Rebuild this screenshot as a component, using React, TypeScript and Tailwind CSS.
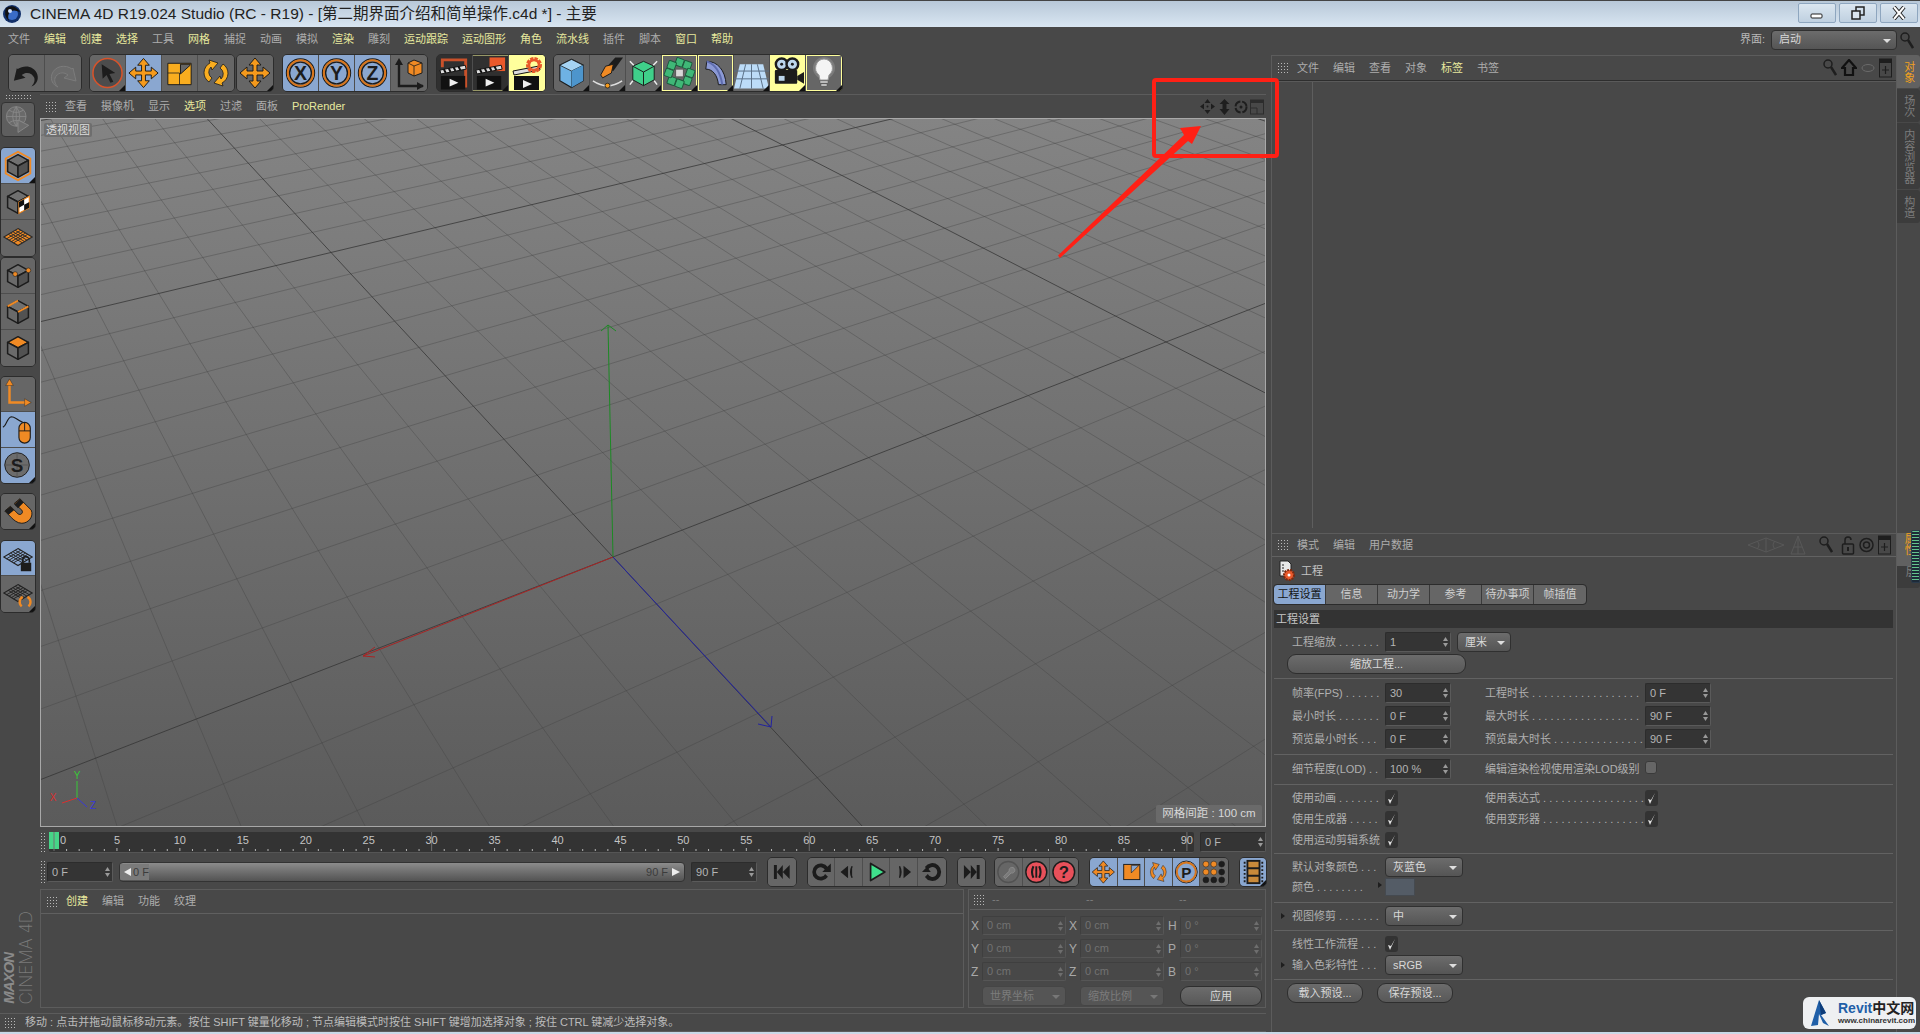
import { ReactNode } from "react";

const O = "#f59a1c";
const K = "#1c1c1c";

const grip = "bg-[radial-gradient(circle,#b8b8b8_0.8px,transparent_1px)] bg-[length:3px_3px]";

// grid on the floor, worked out from the four big crossings in the viewport
const H = { a: 890, b: -126.3, c: 613, d: -116.2, e: -185.8, f: 557, g: 0.289, h: 0.4703 };
const project = (u: number, v: number) => {
  const w = H.g * u + H.h * v + 1;
  return [(H.a * u + H.b * v + H.c) / w - 40, (H.d * u + H.e * v + H.f) / w - 118];
};
const floorLines = () => {
  const out: { p: number[]; q: number[]; major: boolean }[] = [];
  for (let i = -50; i <= 150; i++) {
    const t = i / 10;
    const major = i % 10 === 0;
    const v0 = Math.max(-5, (0.04 - 1 - H.g * t) / H.h);
    const u0 = Math.max(-5, (0.04 - 1 - H.h * t) / H.g);
    out.push({ p: project(t, v0), q: project(t, 15), major });
    out.push({ p: project(u0, t), q: project(15, t), major });
  }
  return out;
};

const Ico = ({ children, s = 36 }: { children: ReactNode; s?: number }) => (
  <svg viewBox="0 0 36 36" width={s} height={s}>{children}</svg>
);

const ARROWS = "M18 3l6 7h-4v6h6v-4l7 6-7 6v-4h-6v6h4l-6 7-6-7h4v-6h-6v4l-7-6 7-6v4h6v-6h-4z";
const Arrows = ({ fill = O }: { fill?: string }) => <path d={ARROWS} fill={fill} stroke={K} strokeWidth="1" strokeLinejoin="round" />;

const Letter = ({ l }: { l: string }) => (
  <>
    <circle cx="18" cy="18" r="14.5" fill="none" stroke={K} strokeWidth="1.2" />
    <circle cx="18" cy="18" r="13" fill="none" stroke="#d8761c" strokeWidth="2.2" />
    <circle cx="18" cy="18" r="11.2" fill="none" stroke={K} strokeWidth="1.4" />
    <text x="18" y="25" textAnchor="middle" fontSize="20" fontWeight="700" fontFamily="Liberation Sans" fill={K}>{l}</text>
  </>
);

const Clapper = ({ top }: { top?: ReactNode }) => (
  <>
    <rect x="0" y="0" width="36" height="36" fill="#303030" />
    {top}
    <rect x="4" y="21" width="25" height="14" fill="#111" />
    <path d="M3 15l26-5 1 4-26 5z" fill="#ddd" stroke="#111" strokeWidth="1" />
    <path d="M7 14l2 4M12 13l2 4M17 12l2 4M22 11l2 4" stroke="#111" strokeWidth="2" />
    <path d="M13 24l9 4-9 4z" fill="#eee" />
  </>
);

const CubeBase = ({ top = "#707070" }: { top?: string }) => (
  <>
    <path d="M18 6l11 6-11 6-11-6z" fill={top} stroke={K} strokeWidth="1.6" strokeLinejoin="round" />
    <path d="M7 12l11 6v12l-11-6z" fill="#6a6a6a" stroke={K} strokeWidth="1.6" strokeLinejoin="round" />
    <path d="M29 12l-11 6v12l11-6z" fill="#525252" stroke={K} strokeWidth="1.6" strokeLinejoin="round" />
  </>
);

const Diamond = ({ stroke, fill }: { stroke: string; fill: string }) => (
  <>
    <path d="M18 8l15 9-15 9-15-9z" fill={fill} stroke={stroke} strokeWidth="1.2" />
    <path d="M12.500 11.300l15 9M7.500 14l15 9M23.500 11.300l-15 9M28.500 14l-15 9M15 9.800l15 9M10 12.800l15 9M21 9.800l-15 9M26 12.800l-15 9" stroke={stroke} strokeWidth="1" fill="none" />
  </>
);

type Tone = "plain" | "blue" | "yellow" | "ring" | "dark";
const tones: Record<Tone, string> = {
  plain: "bg-[#666666]",
  blue: "bg-[#8aa7d0]",
  yellow: "bg-[#ffff9c]",
  ring: "bg-[#666666] shadow-[inset_0_0_0_1px_#ffff9c]",
  dark: "bg-[#303030]",
};

const Btn = ({ tone = "plain", corner, children, w = "w-9", h = "h-9" }: { tone?: Tone; corner?: boolean; children: ReactNode; w?: string; h?: string }) => (
  <div className={`relative flex shrink-0 items-center justify-center overflow-hidden ${w} ${h} ${tones[tone]}`}>
    {children}
    {corner && <span className="absolute bottom-0 right-0 border-[3px] border-transparent border-b-[#111] border-r-[#111]" />}
  </div>
);

const Group = ({ children, className = "", col }: { children: ReactNode; className?: string; col?: boolean }) => (
  <div className={`flex shrink-0 overflow-hidden rounded-[4px] outline outline-[#2c2c2c] ${col ? "flex-col divide-y" : "divide-x"} divide-[#4e4e4e] ${className}`}>
    {children}
  </div>
);

const MenuItem = ({ t, y }: { t: string; y?: boolean }) => (
  <span className={`whitespace-nowrap ${y ? "text-[#e7e89e]" : "text-[#adadad]"}`}>{t}</span>
);

const TopToolbar = () => (
  <div className="flex h-9 items-center pl-[9px]">
    <Group>
      <Btn><Ico><path d="M8 13l-3 13 12-3-4-3c5-4 11-2 13 3 1 4-1 7-3 9 5-2 8-7 6-13-3-8-13-10-20-5z" fill={K} /></Ico></Btn>
      <Btn><Ico><path d="M28 13l3 13-12-3 4-3c-5-4-11-2-13 3-1 4 1 7 3 9-5-2-8-7-6-13 3-8 13-10 20-5z" fill="#6c6c6c" stroke="#7c7c7c" /></Ico></Btn>
    </Group>
    <Group className="ml-[9px]">
      <Btn corner><Ico><circle cx="18" cy="18" r="15" fill="#4c4c4c" stroke="#d8532a" strokeWidth="1.6" /><path d="M12 9l14 9-6 1 4 8-3 1-4-8-4 4z" fill={K} /></Ico></Btn>
      <Btn tone="blue"><Ico><Arrows /></Ico></Btn>
      <Btn><Ico><path d="M6 8h24v22H6z" fill="#f9ad1f" stroke={K} /><path d="M19 9h10v1L19 19z" fill="#666" stroke={K} strokeWidth="1" /><path d="M6 18h12v12" fill="none" stroke={K} strokeWidth="0.8" /></Ico></Btn>
      <Btn><Ico><path d="M11 27A11 11 0 0 1 12 8l-1-3 9 3-6 7-1-3a7 7 0 0 0 1 11z" fill="#f9ad1f" stroke={K} strokeWidth="0.8" /><path d="M25 9a11 11 0 0 1-1 19l1 3-9-3 6-7 1 3a7 7 0 0 0-1-11z" fill="#f9ad1f" stroke={K} strokeWidth="0.8" /></Ico></Btn>
    </Group>
    <Group className="ml-[3px]"><Btn corner><Ico><Arrows /></Ico></Btn></Group>
    <Group className="ml-[10px]">
      <Btn tone="blue"><Ico><Letter l="X" /></Ico></Btn>
      <Btn tone="blue"><Ico><Letter l="Y" /></Ico></Btn>
      <Btn tone="blue"><Ico><Letter l="Z" /></Ico></Btn>
      <Btn><Ico><path d="M8 8v23h24" fill="none" stroke={K} strokeWidth="2.4" /><path d="M8 3l-4 7h8zM33 31l-7-4v8z" fill={K} /><path d="M23 5l8 3v10l-8 3-6-3V8z" fill="#f08a24" stroke={K} /><path d="M17 8l6 3 8-3M23 11v10" fill="none" stroke={K} strokeWidth="0.8" /></Ico></Btn>
    </Group>
    <Group className="ml-[10px]">
      <Btn tone="dark"><Ico><Clapper top={<path d="M4 12V3h27v30h-3V6H7v6z" fill="#c9512a" />} /></Ico></Btn>
      <Btn tone="ring" corner><Ico><Clapper top={<rect x="17" y="2" width="16" height="14" fill="#e9592b" />} /></Ico></Btn>
      <Btn tone="yellow"><Ico><rect width="36" height="36" fill="#ffff9c" /><g transform="translate(1 1)"><path d="M4 20h25v14H4z" fill="#111" /><path d="M3 15l26-5 1 4-26 5z" fill="#ddd" stroke="#111" /><path d="M13 24l9 4-9 4z" fill="#eee" /></g><circle cx="25" cy="10" r="6" fill="none" stroke="#e9592b" strokeWidth="4" strokeDasharray="3 1" /><circle cx="25" cy="10" r="5" fill="none" stroke="#e9592b" strokeWidth="2.5" /></Ico></Btn>
    </Group>
    <Group className="ml-[9px]">
      <Btn corner><Ico><path d="M18 4l12 6v16l-12 7-12-7V10z" fill="#6eb2e4" stroke={K} strokeWidth="1.2" /><path d="M6 10l12 6 12-6-12-6z" fill="#a5d3f3" stroke={K} strokeWidth="0.8" /><path d="M18 16v17" stroke={K} strokeWidth="0.8" /><path d="M18 16l12-6v16l-12 7z" fill="#4d95cc" /></Ico></Btn>
      <Btn corner><Ico><path d="M26 2l8 0-10 14-8-3z" fill={K} /><path d="M24 9l-8 2-5 9 2 3 9-5z" fill="#f08a24" stroke={K} /><path d="M3 26q15 10 30 0" fill="none" stroke="#ddd" strokeWidth="1.5" /><circle cx="18" cy="31" r="2.500" fill={O} stroke={K} strokeWidth="0.8" /></Ico></Btn>
      <Btn corner><Ico><path d="M18 6l11 5v14l-11 6-11-6V11z" fill="#3fd08a" stroke={K} /><path d="M7 11l11 6 11-6" fill="none" stroke={K} /><path d="M18 17v14" stroke={K} /><path d="M4 6l4 4M32 6l-4 4M4 30l3-4M32 30l-3-4" stroke="#eee" strokeWidth="1.500" /></Ico></Btn>
      <Btn tone="ring" corner><Ico>
        {[[18, 7], [26, 10], [29, 18], [26, 26], [18, 29], [10, 26], [7, 18], [10, 10]].map(([x, y]) => (
          <rect key={`${x}-${y}`} x={x - 4} y={y - 4} width="8" height="8" rx="1" fill="#3fb877" stroke="#1d5a3c" transform={`rotate(20 ${x} ${y})`} />
        ))}
        <rect x="14" y="14" width="8" height="8" fill="#d8d8d8" stroke="#555" />
      </Ico></Btn>
      <Btn tone="ring" corner><Ico><path d="M9 6c11 0 19 9 20 24h-8C20 20 15 14 8 14z" fill="#8b99d4" stroke={K} /><path d="M9 6c9 3 14 11 16 24" fill="none" stroke="#5e6cae" strokeWidth="2" /></Ico></Btn>
      <Btn corner><Ico><path d="M6 9h24l6 25H0z" fill="#bcdcf8" /><path d="M0 16h36M0 24h36M12 9L6 34M24 9l6 25M18 9v25" stroke="#5a6f86" strokeWidth="1" /><rect y="4" width="36" height="3" fill="#666" /></Ico></Btn>
      <Btn tone="yellow" corner><Ico><circle cx="12" cy="9" r="6" fill="#bcd6ec" stroke={K} strokeWidth="2.5" /><circle cx="23" cy="9" r="6" fill="#bcd6ec" stroke={K} strokeWidth="2.5" /><circle cx="12" cy="9" r="1.500" fill={K} /><circle cx="23" cy="9" r="1.500" fill={K} /><rect x="5" y="15" width="23" height="14" rx="1" fill={K} /><rect x="9" y="21" width="6" height="5" fill="#bcd6ec" /><path d="M28 21l7-4v12l-7-4z" fill={K} /></Ico></Btn>
      <Btn tone="ring" corner><Ico><circle cx="18" cy="13" r="11" fill="#8a8a8a" opacity=".6" /><path d="M18 4a9 9 0 0 1 5 16l-1 5h-8l-1-5a9 9 0 0 1 5-16z" fill="#f4f4f4" stroke="#999" /><path d="M14 26h8v2h-8zM15 29h6v2h-6z" fill="#ddd" stroke="#555" strokeWidth="0.5" /></Ico></Btn>
    </Group>
  </div>
);

const SideBar = () => (
  <div className="relative flex w-10 shrink-0 flex-col pl-px">
    <div className={`ml-1 h-[6px] w-[26px] ${grip}`} />
    <div className="mt-[2px] flex h-[35px] w-[34px] items-center justify-center rounded-[4px] border border-[#333] bg-[#5e5e5e]">
      <Ico s={32}><circle cx="16" cy="14" r="11" fill="#6a6a6a" stroke="#888" /><path d="M5 14h22M16 3v22M8 7q8 5 16 0M8 21q8-5 16 0M16 3q-8 11 0 22M16 3q8 11 0 22" fill="none" stroke="#888" /><path d="M18 18l12 6-12 8z" fill="#6d6d6d" stroke="#8a8a8a" /></Ico>
    </div>
    <Group col className="mt-[11px] w-[34px]">
      <Btn tone="blue" corner w="w-full"><Ico s={34}><path d="M18 3l13 7v16l-13 7-13-7V10z" fill="none" stroke="#f08a24" strokeWidth="2" /><CubeBase /></Ico></Btn>
      <Btn w="w-full"><Ico s={34}><CubeBase /><path d="M30 12l-11 6v12l11-6z" fill="#fff" stroke="#f08a24" strokeWidth="1.200" /><path d="M19 18l5.500-3v6l-5.500 3zM24.500 21l5.500-3v6l-5.500 3z" fill="#111" /></Ico></Btn>
      <Btn w="w-full"><Ico s={34}><Diamond stroke="#2a2a2a" fill="#f08a24" /></Ico></Btn>
    </Group>
    <Group col className="mt-[2px] w-[34px]">
      <Btn w="w-full"><Ico s={34}><CubeBase /><circle cx="15" cy="16" r="2.500" fill="#f08a24" stroke={K} strokeWidth="0.6" /><circle cx="29" cy="12" r="2.500" fill="#f08a24" stroke={K} strokeWidth="0.6" /></Ico></Btn>
      <Btn w="w-full"><Ico s={34}><CubeBase /><path d="M7 12l11-6" stroke="#f08a24" strokeWidth="2" /><path d="M18 18l11-6" stroke="#f08a24" strokeWidth="2" /></Ico></Btn>
      <Btn w="w-full"><Ico s={34}><CubeBase top="#f08a24" /></Ico></Btn>
    </Group>
    <Group col className="mt-[11px] w-[34px]">
      <Btn w="w-full" h="h-[35.300px]"><Ico s={34}><path d="M9 7v20h19" fill="none" stroke="#f08a24" strokeWidth="2.600" /><path d="M9 2l-4 7h8zM32 27l-7-4v8z" fill="#f08a24" stroke={K} strokeWidth="0.4" /></Ico></Btn>
      <Btn tone="blue" w="w-full" h="h-[35.300px]"><Ico s={34}><path d="M2 16c4-1 4-10 9-11 4 0 5 3 12 6" fill="none" stroke={K} strokeWidth="1.200" /><rect x="19" y="11" width="12" height="22" rx="6" fill="#f08a24" stroke={K} strokeWidth="1.200" /><path d="M19 20h12M25 11v9" stroke={K} strokeWidth="1" /></Ico></Btn>
      <Btn tone="blue" corner w="w-full" h="h-[35.300px]"><Ico s={34}><circle cx="17" cy="18" r="13" fill="#6c6c6c" stroke={K} /><path d="M4 18h26M17 5v26" stroke="#555" /><text x="17" y="25" textAnchor="middle" fontSize="20" fontWeight="700" fontFamily="Liberation Sans" fill={K}>S</text></Ico></Btn>
    </Group>
    <Group className="mt-[11px] w-[34px]">
      <Btn corner w="w-full" h="h-[35px]"><Ico s={34}><path d="M20 5l12 12c3 7-3 14-10 14-5 0-9-4-11-6L4 18l6-5 8 8c3 2 6-1 4-4l-8-7z" fill="#f08a24" stroke={K} /><path d="M4 18l6-5 4 4-6 5zM20 5l-6 6 4 4 6-6z" fill={K} /></Ico></Btn>
    </Group>
    <Group col className="mt-[12px] w-[34px]">
      <Btn tone="blue" w="w-full" h="h-[35.500px]"><Ico s={34}><Diamond stroke="#222" fill="none" /><rect x="21" y="23" width="11" height="9" fill={K} /><path d="M23 23v-3a3.500 3.500 0 0 1 7 0v3" fill="none" stroke={K} strokeWidth="1.800" /></Ico></Btn>
      <Btn corner w="w-full" h="h-[35.500px]"><Ico s={34}><Diamond stroke="#222" fill="none" /><path d="M23 21a6 6 0 0 0-1 10M28 21a6 6 0 0 1 1 10" fill="none" stroke="#f08a24" strokeWidth="2.500" /></Ico></Btn>
    </Group>
    <div className="mt-auto mb-[4px] flex items-end gap-[3px] pl-[1px]">
      <span className="whitespace-nowrap text-[15px] leading-[14px] font-black italic tracking-[-1px] text-[#8a8a8a] [writing-mode:vertical-rl] rotate-180">MAXON</span>
      <span className="whitespace-nowrap text-[17px] leading-[14px] font-extralight text-[#7a7a7a] [font-family:Inter,sans-serif] [writing-mode:vertical-rl] rotate-180">CINEMA 4D</span>
    </div>
  </div>
);

const Viewport = () => (
  <div className="relative h-[709px] overflow-hidden border border-[#a8a8a8] bg-linear-to-b from-[#848484] to-[#5b5b5b]">
    <svg width="1226" height="709" className="absolute -left-px -top-px">
      {floorLines().map((l, i) => (
        <line key={i} x1={l.p[0]} y1={l.p[1]} x2={l.q[0]} y2={l.q[1]} stroke={l.major ? "#333333" : "#404040"} strokeOpacity={l.major ? 0.75 : 0.36} strokeWidth="1" />
      ))}
      <line x1="573" y1="439" x2="568" y2="207" stroke="#1c8a24" />
      <path d="M561 213l7-6 8 6" fill="none" stroke="#1c8a24" />
      <line x1="573" y1="439" x2="323" y2="538" stroke="#a82424" />
      <path d="M335 529l-12 9 12 1" fill="none" stroke="#a82424" />
      <line x1="573" y1="439" x2="731" y2="609" stroke="#2323a0" />
      <path d="M718 606l13 3 1-11" fill="none" stroke="#2323a0" />
      <line x1="37" y1="680" x2="37" y2="663" stroke="#38c838" />
      <line x1="37" y1="680" x2="22" y2="685" stroke="#d83030" />
      <line x1="37" y1="680" x2="47" y2="689" stroke="#3838d8" />
      <text x="37" y="661" textAnchor="middle" fontSize="10" fontFamily="Liberation Sans" fill="#38c838">Y</text>
      <text x="13" y="683" textAnchor="middle" fontSize="10" fontFamily="Liberation Sans" fill="#d83030">X</text>
      <text x="53" y="691" textAnchor="middle" fontSize="10" fontFamily="Liberation Sans" fill="#3838d8">Z</text>
    </svg>
    <span className="absolute left-[3px] top-[4px] rounded-[2px] bg-[#6e6e6e] px-[2px] text-[11px] leading-[14px] text-[#dcdcdc]">透视视图</span>
    <span className="absolute bottom-[3px] right-[3px] flex h-[18px] w-[106px] items-center justify-center rounded-[2px] bg-[#6a6a6a] text-[11.500px] text-[#d8d8d8]">网格间距 : 100 cm</span>
  </div>
);

const Spin = ({ dim }: { dim?: boolean }) => (
  <svg width="5" height="10" viewBox="0 0 5 10" className="absolute right-[2px] top-1/2 -translate-y-1/2"><path d="M2.500 0l2.500 4H0zM2.500 10L0 6h5z" fill={dim ? "#6e6e6e" : "#9a9a9a"} /></svg>
);

const Field = ({ v, w = "w-[66px]", h = "h-5" }: { v: string; w?: string; h?: string }) => (
  <div className={`relative flex shrink-0 items-center rounded-[2px] border border-[#2c2c2c] border-b-[#5a5a5a] border-r-[#5a5a5a] bg-[#343434] pl-[4px] text-[11px] text-[#b4b4b4] ${w} ${h}`}>
    {v}<Spin />
  </div>
);

const DimField = ({ v }: { v: string }) => (
  <div className="relative flex h-[19px] flex-1 items-center rounded-[2px] border border-[#3f3f3f] border-b-[#565656] border-r-[#565656] bg-[#484848] pl-[4px] text-[11px] text-[#727272]">
    {v}<Spin dim />
  </div>
);

const Drop = ({ v, w = "w-[78px]", dim }: { v: string; w?: string; dim?: boolean }) => (
  <div className={`relative flex h-5 shrink-0 items-center rounded-[4px] border pl-[7px] text-[11px] ${w} ${dim ? "border-[#454545] bg-[#555555] text-[#7c7c7c]" : "border-[#303030] bg-linear-to-b from-[#6c6c6c] to-[#555555] text-[#d8d8d8]"}`}>
    {v}
    <span className={`absolute right-[5px] top-[8px] border-x-[4px] border-t-[4px] border-x-transparent ${dim ? "border-t-[#777]" : "border-t-[#dedede]"}`} />
  </div>
);

const Pill = ({ t, w }: { t: string; w: string }) => (
  <div className={`flex h-5 shrink-0 items-center justify-center rounded-[9px] border border-[#2e2e2e] bg-linear-to-b from-[#6c6c6c] to-[#585858] text-[11px] text-[#d8d8d8] ${w}`}>{t}</div>
);

const Ruler = () => {
  const step = 12.588;
  return (
    <div className="relative h-[21px] w-[1145px] shrink-0 rounded-[2px] border-b border-[#555] bg-[#333333]">
      <div className="absolute left-0 top-0 h-[17px] w-[10px] bg-[#46d488]" />
      <svg width="1145" height="21" className="absolute left-0 top-0">
        {Array.from({ length: 91 }, (_, i) => {
          const x = 5 + i * step;
          const big = i % 30 === 0;
          return <line key={i} x1={x} x2={x} y1={big ? 0 : i % 5 === 0 ? 16 : 17} y2={19} stroke={big ? "#707070" : "#b5b5b5"} />;
        })}
      </svg>
      <div className="relative flex pl-[5px] pt-[1px] text-[11px] leading-[14px] text-[#c4c4c4]">
        {Array.from({ length: 19 }, (_, i) => (
          <div key={i} className="w-[62.940px] shrink-0"><span className={`inline-block -translate-x-1/2 ${i === 0 ? "ml-[9px]" : ""}`}>{i * 5}</span></div>
        ))}
      </div>
    </div>
  );
};

const Slider = () => (
  <div className="flex h-5 w-[566px] shrink-0 items-center justify-between overflow-hidden rounded-[4px] border border-[#333] bg-linear-to-b from-[#8c8c8c] to-[#535353] text-[11px] text-[#3c3c3c]">
    <div className="flex items-center gap-[2px] bg-[#7a7a7a] pl-[4px]"><svg width="7" height="8"><path d="M7 0v8L0 4z" fill="#eee" /></svg><span>0 F</span></div>
    <div className="flex items-center gap-[2px]"><span>90 F</span><svg width="14" height="10"><path d="M2 1v8l8-4z" fill="#eee" /></svg></div>
  </div>
);

const Tb = ({ children, tone }: { children: ReactNode; tone?: Tone }) => (
  <Btn w="w-[27.600px]" h="h-7" tone={tone}><svg viewBox="0 0 28 28" width="28" height="28">{children}</svg></Btn>
);

const Transport = () => (
  <div className="flex h-7 items-center">
    <div className={`h-[24px] w-[6px] ${grip}`} />
    <div className="ml-[2px]"><Field v="0 F" /></div>
    <div className="ml-[6px]"><Slider /></div>
    <div className="ml-[6px]"><Field v="90 F" /></div>
    <Group className="ml-[11px]"><Tb><path d="M6 7h3v14H6zM15 7v14l-6-7zM22 7v14l-7-7z" fill={K} /></Tb></Group>
    <Group className="ml-[12px]">
      <Tb><path d="M21 9a9 9 0 1 0 0 10l-3-3a5 5 0 1 1 0-4z" fill={K} /><path d="M24 5v9h-9z" fill={K} /></Tb>
      <Tb><path d="M13 9v10l-6-5zM18 8q-3 6 0 12" fill={K} stroke={K} strokeWidth="1.500" /></Tb>
      <Tb><path d="M8 5l15 9-15 9z" fill="#3fe08c" stroke={K} strokeWidth="1.800" strokeLinejoin="round" /></Tb>
      <Tb><path d="M15 9v10l6-5zM10 8q3 6 0 12" fill={K} stroke={K} strokeWidth="1.500" /></Tb>
      <Tb><path d="M7 9a9 9 0 1 1 0 10l3-3a5 5 0 1 0 0-4z" fill={K} /><path d="M4 14h9l-4 -5z" fill={K} /></Tb>
    </Group>
    <Group className="ml-[12px]"><Tb><path d="M6 7v14l7-7zM13 7v14l6-7zM19 7h3v14h-3z" fill={K} /></Tb></Group>
    <Group className="ml-[10px]">
      <Tb><circle cx="14" cy="14" r="11" fill="#666" stroke="#525252" strokeWidth="1.500" /><path d="M9 19l6-6a3 3 0 1 1 2 2l-6 6z" fill="#7a7a7a" stroke="#8c8c8c" /></Tb>
      <Tb><circle cx="14" cy="14" r="11" fill="#e8505a" stroke={K} strokeWidth="1.500" /><path d="M11 8q-3 6 0 12M17 8q3 6 0 12" fill="none" stroke={K} strokeWidth="2.200" /><rect x="13" y="8" width="2" height="12" fill={K} /></Tb>
      <Tb><circle cx="14" cy="14" r="11" fill="#e8505a" stroke={K} strokeWidth="1.500" /><text x="14" y="20" textAnchor="middle" fontSize="17" fontWeight="700" fontFamily="Liberation Sans" fill={K}>?</text></Tb>
    </Group>
    <Group className="ml-[12px]">
      <Tb tone="blue"><g transform="scale(.78)"><Arrows fill="#f08a24" /></g></Tb>
      <Tb tone="blue"><rect x="6" y="6" width="17" height="16" fill="#f08a24" stroke={K} /><path d="M14 7h8v0l-8 8z" fill="#8aa7d0" stroke={K} strokeWidth="0.700" /></Tb>
      <Tb tone="blue"><path d="M9 21A9 9 0 0 1 9 7l-1-3 7 2-4 6-1-3a6 6 0 0 0 1 9z" fill="#f08a24" stroke={K} strokeWidth="0.500" /><path d="M19 7a9 9 0 0 1 0 14l1 3-7-2 4-6 1 3a6 6 0 0 0-1-9z" fill="#f08a24" stroke={K} strokeWidth="0.500" /></Tb>
      <Tb tone="blue"><circle cx="14" cy="14" r="11.500" fill="none" stroke={K} strokeWidth="1" /><circle cx="14" cy="14" r="10" fill="none" stroke="#d8761c" strokeWidth="2" /><text x="14" y="20" textAnchor="middle" fontSize="16" fontWeight="700" fontFamily="Liberation Sans" fill={K}>P</text></Tb>
      <Tb>{[6, 14, 22].map((y) => [6, 14, 22].map((x) => <circle key={`${x}${y}`} cx={x} cy={y} r="3" fill={y === 22 || x === 22 ? K : "#f08a24"} stroke={K} strokeWidth="0.500" />))}</Tb>
    </Group>
    <Group className="ml-[12px]">
      <Btn w="w-[26px]" h="h-7" tone="blue" corner><svg viewBox="0 0 28 28" width="26" height="28"><rect x="8" y="2" width="13" height="24" fill="#c98a3a" stroke={K} strokeWidth="2" /><path d="M8 10h13M8 18h13" stroke={K} strokeWidth="2" /><path d="M5 3v22M24 3v22" stroke={K} strokeWidth="2" strokeDasharray="2 2" /></svg></Btn>
    </Group>
  </div>
);

const PanelMenu = ({ items, gripClass = "" }: { items: [string, boolean?][]; gripClass?: string }) => (
  <div className={`flex items-center gap-[14px] text-[11px] ${gripClass}`}>
    {items.map(([t, y]) => <MenuItem key={t} t={t} y={y} />)}
  </div>
);

const HeaderGrip = () => <div className={`h-[12px] w-[12px] shrink-0 ${grip}`} />;

const BottomPanels = () => (
  <div className="mt-[3px] flex h-[119px] gap-[4px]">
    <div className="flex w-[924px] flex-col border border-[#5c5c5c]">
      <div className="flex h-[24px] items-center gap-[8px] border-b border-[#606060] pl-[5px]">
        <HeaderGrip />
        <PanelMenu items={[["创建", true], ["编辑"], ["功能"], ["纹理"]]} />
      </div>
    </div>
    <div className="flex flex-1 flex-col border border-[#5c5c5c] pl-[1px] pr-[3px]">
      <div className="flex h-[20px] shrink-0 items-center border-b border-[#606060] pl-[3px] text-[11px] text-[#7e7e7e]">
        <HeaderGrip />
        <span className="ml-[7px] w-[94px]">--</span>
        <span className="w-[93px]">--</span>
        <span>--</span>
      </div>
      <div className="mt-[6px] flex flex-col gap-[4px] text-[12px] text-[#a8a8a8]">
        {[["X", "X", "H", "0 cm", "0 °"], ["Y", "Y", "P", "0 cm", "0 °"], ["Z", "Z", "B", "0 cm", "0 °"]].map((r) => (
          <div key={r[0]} className="flex items-center">
            <span className="w-[12px] shrink-0 pl-[1px]">{r[0]}</span><div className="flex w-[84px]"><DimField v={r[3]} /></div>
            <span className="w-[14px] shrink-0 pl-[3px]">{r[1]}</span><div className="flex w-[84px]"><DimField v={r[3]} /></div>
            <span className="w-[16px] shrink-0 pl-[4px]">{r[2]}</span><div className="flex w-[82px]"><DimField v={r[4]} /></div>
          </div>
        ))}
      </div>
      <div className="mt-[5px] flex items-center pl-[12px]">
        <Drop v="世界坐标" w="w-[84px]" dim />
        <div className="ml-[14px]"><Drop v="缩放比例" w="w-[84px]" dim /></div>
        <div className="ml-[16px]"><Pill t="应用" w="w-[82px]" /></div>
      </div>
    </div>
  </div>
);

const Check = () => (
  <div className="flex h-[16px] w-[13px] shrink-0 items-center justify-center rounded-[3px] bg-[#333333]">
    <svg width="11" height="13"><path d="M2 7l2 5 5-11-4 7z" fill="#dedede" /></svg>
  </div>
);

const Lbl = ({ t, w = "w-[93px]" }: { t: string; w?: string }) => (
  <span className={`shrink-0 whitespace-nowrap text-[11px] text-[#b0b0b0] ${w}`}>{t}</span>
);

const Sep = ({ mt }: { mt: string }) => <div className={`h-px w-[619px] bg-[#626262] ${mt}`} />;

const Tri = () => <span className="absolute left-[9px] top-1/2 -translate-y-1/2 border-y-[3px] border-l-[4px] border-y-transparent border-l-[#1e1e1e]" />;

const Row = ({ children, mt, tri, h = "h-5" }: { children: ReactNode; mt: string; tri?: boolean; h?: string }) => (
  <div className={`relative flex items-center pl-[20px] ${h} ${mt}`}>{tri && <Tri />}{children}</div>
);

const TAB_NAMES = ["工程设置", "信息", "动力学", "参考", "待办事项", "帧插值"];

const AttributePanel = () => (
  <div className="flex flex-1 flex-col border-t border-[#5c5c5c]">
    <div className="flex h-[23px] shrink-0 items-center gap-[8px] border-b border-[#626262] pl-[5px] pr-[5px]">
      <HeaderGrip />
      <PanelMenu items={[["模式"], ["编辑"], ["用户数据"]]} />
      <div className="ml-auto flex items-center gap-[4px]">
        <svg width="38" height="20"><path d="M1 10L19 3l18 7-18 7zM19 3v14M10 6q4 4 0 8M28 6q-4 4 0 8" fill="none" stroke="#585858" /></svg>
        <svg width="18" height="20"><path d="M9 1l7 18H2zM9 1v18M5 12h8" fill="none" stroke="#585858" /></svg>
        <svg width="14" height="20" className="ml-[8px]"><circle cx="5" cy="6" r="4" fill="none" stroke="#1e1e1e" strokeWidth="1.500" /><path d="M8 9l5 8" stroke="#1e1e1e" strokeWidth="2.500" /></svg>
        <svg width="14" height="20" className="ml-[4px]"><rect x="1.500" y="9" width="11" height="10" rx="1" fill="none" stroke="#1e1e1e" strokeWidth="1.500" /><path d="M4 9V5a3 3 0 0 1 6 0" fill="none" stroke="#1e1e1e" strokeWidth="1.500" /><rect x="6" y="12" width="2" height="4" fill="#1e1e1e" /></svg>
        <svg width="15" height="20"><circle cx="7.500" cy="10" r="6.500" fill="none" stroke="#1e1e1e" strokeWidth="1.500" /><circle cx="7.500" cy="10" r="3" fill="none" stroke="#1e1e1e" strokeWidth="1.500" /></svg>
        <svg width="13" height="20"><rect x=".5" y="1" width="12" height="18" fill="none" stroke="#1e1e1e" /><rect y="1" width="13" height="4" fill="#1e1e1e" /><path d="M6.500 8v8M3 12h7" stroke="#1e1e1e" strokeWidth="1.200" /></svg>
      </div>
    </div>
    <div className="flex h-[28px] shrink-0 items-center gap-[6px] pl-[6px] text-[11px] text-[#b8b8b8]">
      <svg width="17" height="22"><path d="M2 1h8l3 3v12H2z" fill="#e8e8e8" stroke="#222" /><path d="M4 5h2M4 8h2M4 11h2" stroke="#222" /><circle cx="11" cy="15" r="5" fill="#e9592b" stroke="#7a2a10" strokeWidth="2" strokeDasharray="2 1" /><circle cx="11" cy="15" r="1.500" fill="#fff" /></svg>
      <span className="text-[#c4c4c4]">工程</span>
    </div>
    <div className="ml-[2px] flex h-[19px] w-[312px] shrink-0 overflow-hidden rounded-[3px] outline outline-[#2c2c2c] divide-x divide-[#3a3a3a] text-[11px]">
      {TAB_NAMES.map((t, i) => (
        <div key={t} className={`flex w-[52px] items-center justify-center ${i === 0 ? "bg-[#8aa7d0] text-[#111]" : "bg-[#666666] text-[#cfcfcf]"}`}>{t}</div>
      ))}
    </div>
    <div className="mt-[6px] ml-[2px] flex h-[18px] w-[619px] shrink-0 items-center bg-[#333333] pl-[2px] text-[11px] text-[#c8c8c8]">工程设置</div>

    <Row mt="mt-[4px]"><Lbl t="工程缩放 . . . . . . ." /><Field v="1" /><div className="ml-[6px]"><Drop v="厘米" w="w-[54px]" /></div></Row>
    <div className="mt-[2px] ml-[15px]"><Pill t="缩放工程..." w="w-[179px]" /></div>
    <div className="ml-[2px]"><Sep mt="mt-[4px]" /></div>

    <Row mt="mt-[4px]"><Lbl t="帧率(FPS) . . . . . ." /><Field v="30" /><div className="ml-[34px] flex items-center"><Lbl w="w-[160px]" t="工程时长 . . . . . . . . . . . . . . . . . ." /><Field v="0 F" /></div></Row>
    <Row mt="mt-[3px]"><Lbl t="最小时长 . . . . . . ." /><Field v="0 F" /><div className="ml-[34px] flex items-center"><Lbl w="w-[160px]" t="最大时长 . . . . . . . . . . . . . . . . . ." /><Field v="90 F" /></div></Row>
    <Row mt="mt-[3px]"><Lbl t="预览最小时长 . . ." /><Field v="0 F" /><div className="ml-[34px] flex items-center"><Lbl w="w-[160px]" t="预览最大时长 . . . . . . . . . . . . . . ." /><Field v="90 F" /></div></Row>
    <div className="ml-[2px]"><Sep mt="mt-[5px]" /></div>

    <Row mt="mt-[4px]"><Lbl t="细节程度(LOD) . ." /><Field v="100 %" /><div className="ml-[34px] flex items-center"><Lbl w="w-[160px]" t="编辑渲染检视使用渲染LOD级别" /><span className="-mt-[3px] h-[13px] w-[12px] rounded-[3px] border border-[#3a3a3a] bg-[#666666]" /></div></Row>
    <div className="ml-[2px]"><Sep mt="mt-[5px]" /></div>

    <Row mt="mt-[5px]" h="h-4"><Lbl t="使用动画 . . . . . . ." /><Check /><div className="ml-[87px] flex items-center"><Lbl w="w-[160px]" t="使用表达式 . . . . . . . . . . . . . . . . ." /><Check /></div></Row>
    <Row mt="mt-[5px]" h="h-4"><Lbl t="使用生成器 . . . . ." /><Check /><div className="ml-[87px] flex items-center"><Lbl w="w-[160px]" t="使用变形器 . . . . . . . . . . . . . . . . ." /><Check /></div></Row>
    <Row mt="mt-[5px]" h="h-4"><Lbl t="使用运动剪辑系统" /><Check /></Row>
    <div className="ml-[2px]"><Sep mt="mt-[5px]" /></div>

    <Row mt="mt-[3px]"><Lbl t="默认对象颜色 . . ." /><Drop v="灰蓝色" /></Row>
    <Row mt="mt-[1px]" h="h-[18px]"><Lbl t="颜色  . . . . . . . ." /><span className="relative h-[18px] w-[30px] border border-[#454a50] bg-[#545c66]"><span className="absolute -left-[8px] top-[3px] border-y-[3px] border-l-[4px] border-y-transparent border-l-[#1e1e1e]" /></span></Row>
    <div className="ml-[2px]"><Sep mt="mt-[6px]" /></div>

    <Row mt="mt-[3px]" tri><Lbl t="视图修剪 . . . . . . ." /><Drop v="中" /></Row>
    <div className="ml-[2px]"><Sep mt="mt-[4px]" /></div>

    <Row mt="mt-[5px]" h="h-4"><Lbl t="线性工作流程 . . ." /><Check /></Row>
    <Row mt="mt-[3px]" tri><Lbl t="输入色彩特性 . . ." /><Drop v="sRGB" /></Row>
    <div className="ml-[2px]"><Sep mt="mt-[4px]" /></div>

    <div className="mt-[3px] ml-[15px] flex gap-[14px]"><Pill t="载入预设..." w="w-[76px]" /><Pill t="保存预设..." w="w-[76px]" /></div>
  </div>
);

const SIDE_TABS: [string, string, boolean?][] = [["对象", "h-[33px]", true], ["场次", "h-[33px]"], ["内容浏览器", "h-[66px]"], ["构造", "h-[33px]"]];

const RightTabs = () => (
  <div className="flex w-[23px] shrink-0 flex-col text-[11px]">
    <div className="flex h-[478px] flex-col gap-px">
      {SIDE_TABS.map(([t, h, on]) => (
        <div key={t} className={`flex w-full items-center justify-center rounded-r-[3px] [writing-mode:vertical-rl] ${h} ${on ? "bg-[#616161] text-[#f0a020]" : "bg-[#3c3c3c] text-[#7c7c7c]"}`}>{t}</div>
      ))}
    </div>
    <div className="relative flex h-[33px] items-center justify-start bg-[#616161] pl-[1px] text-[#f0a020] [writing-mode:vertical-rl]">属性
      <div className="absolute -top-[3px] right-0 h-[53px] w-[9px] rounded-l-[2px] border border-[#2a3a4a] bg-[#1d2a38] bg-[repeating-linear-gradient(to_bottom,#63c38c_0,#63c38c_1px,transparent_1px,transparent_3px)]" />
    </div>
    <div className="flex h-[22px] items-center justify-start rounded-r-[3px] bg-[#3c3c3c] pl-[3px] text-[#7c7c7c] [writing-mode:vertical-rl]">层</div>
  </div>
);

export default function App() {
  return (
    <div className="relative flex h-[1034px] w-[1920px] flex-col overflow-hidden bg-[#484848] [font-family:'Liberation_Sans','Noto_Sans_CJK_SC',sans-serif]">
      {/* title bar */}
      <div className="flex h-[27px] shrink-0 items-center border-t border-[#444] bg-linear-to-b from-[#b8c8d8] to-[#d9e6f2] pl-[2px]">
        <svg width="20" height="22" viewBox="0 0 20 22"><circle cx="10" cy="11" r="9" fill="#12306a" /><circle cx="10" cy="11" r="6" fill="#3a6cc8" /><path d="M4 5q8-5 14 4-7-3-10 0-3 3-1 9-6-6-3-13z" fill="#111" /><circle cx="8" cy="8" r="2" fill="#cfe0ff" /></svg>
        <span className="ml-[8px] text-[15.500px] text-[#222]">CINEMA 4D R19.024 Studio (RC - R19) - [第二期界面介绍和简单操作.c4d *] - 主要</span>
        <div className="ml-auto mr-[2px] flex gap-[3px] self-start pt-[2px]">
          {["min", "max", "close"].map((b) => (
            <div key={b} className="flex h-5 w-[38px] items-center justify-center rounded-[2px] border border-[#8ea6bf] bg-linear-to-b from-[#dbe6f0] to-[#bfd0e0]">
              <svg width="16" height="14">
                {b === "min" && <rect x="2" y="8" width="11" height="4" rx="1" fill="#fff" stroke="#222" />}
                {b === "max" && <><rect x="6" y="1" width="8" height="8" fill="none" stroke="#222" strokeWidth="1.500" /><rect x="2" y="5" width="8" height="8" fill="#dbe6f0" stroke="#222" strokeWidth="1.500" /></>}
                {b === "close" && <><path d="M3 1l10 12M13 1L3 13" stroke="#222" strokeWidth="4" /><path d="M3 1l10 12M13 1L3 13" stroke="#fff" strokeWidth="2" /></>}
              </svg>
            </div>
          ))}
        </div>
      </div>

      {/* main menu */}
      <div className="flex h-[28px] shrink-0 items-center pb-[3px] pl-[8px] text-[11px]">
        <div className="flex gap-[14px]">
          {([["文件"], ["编辑", true], ["创建", true], ["选择", true], ["工具"], ["网格", true], ["捕捉"], ["动画"], ["模拟"], ["渲染", true], ["雕刻"], ["运动跟踪", true], ["运动图形", true], ["角色", true], ["流水线", true], ["插件"], ["脚本"], ["窗口", true], ["帮助", true]] as [string, boolean?][]).map(([t, y]) => (
            <MenuItem key={t} t={t} y={y} />
          ))}
        </div>
        <div className="ml-auto flex items-center pr-[6px]">
          <span className="mr-[6px] text-[#b8b8b8]">界面:</span>
          <Drop v="启动" w="w-[126px]" />
          <svg width="14" height="18" className="ml-[3px]"><circle cx="5" cy="6" r="4" fill="none" stroke="#1e1e1e" strokeWidth="1.500" /><path d="M8 9l5 8" stroke="#1e1e1e" strokeWidth="2.500" /></svg>
        </div>
      </div>

      <div className="flex min-h-0 flex-1">
        {/* left: toolbars, viewport, timeline */}
        <div className="flex w-[1271px] shrink-0 flex-col">
          <TopToolbar />
          <div className="mt-[3px] flex h-[914px] shrink-0">
            <SideBar />
            <div className="flex w-[1226px] shrink-0 flex-col">
              <div className="flex h-[24px] shrink-0 items-center gap-[8px] border-t border-[#5c5c5c] pl-[5px] pr-[2px]">
                <HeaderGrip />
                <PanelMenu items={[["查看"], ["摄像机"], ["显示"], ["选项", true], ["过滤"], ["面板"], ["ProRender", true]]} />
                <div className="ml-auto flex items-center gap-[2px]">
                  <svg width="15" height="15" viewBox="0 0 15 15"><path d="M7.500 0l3 4h-6zM7.500 15l-3-4h6zM0 7.500l4-3v6zM15 7.500l-4 3v-6z" fill="#1e1e1e" /><circle cx="7.500" cy="7.500" r="1" fill="#1e1e1e" /></svg>
                  <svg width="15" height="16" viewBox="0 0 15 16"><path d="M7.500 0l5 5H9.500v5h3l-5 6-5-6h3V5h-3z" fill="#1e1e1e" /></svg>
                  <svg width="14" height="14" viewBox="0 0 14 14"><circle cx="7" cy="7" r="5.500" fill="none" stroke="#1e1e1e" strokeWidth="2" strokeDasharray="7 1.800" /><circle cx="7" cy="7" r="1.500" fill="#1e1e1e" /></svg>
                  <svg width="14" height="16" viewBox="0 0 14 16"><rect x=".5" y="1" width="13" height="14" fill="none" stroke="#2c2c2c" /><rect y="1" width="14" height="3" fill="#2c2c2c" /><path d="M1 9h6v6" fill="none" stroke="#2c2c2c" /></svg>
                </div>
              </div>
              <Viewport />
              <div className="mt-[5px] flex h-[21px] shrink-0 items-start">
                <div className={`mr-[3px] h-[21px] w-[6px] ${grip}`} />
                <Ruler />
                <div className="ml-[6px]"><Field v="0 F" /></div>
              </div>
              <div className="mt-[5px]"><Transport /></div>
              <BottomPanels />
            </div>
          </div>
          {/* status line */}
          <div className="mt-[5px] flex h-[19px] w-[1266px] shrink-0 items-center gap-[9px] border-y border-[#5c5c5c] pl-[4px] text-[11px] text-[#bcbcbc]">
            <HeaderGrip />
            <span>移动 : 点击并拖动鼠标移动元素。按住 SHIFT 键量化移动 ; 节点编辑模式时按住 SHIFT 键增加选择对象 ; 按住 CTRL 键减少选择对象。</span>
          </div>
        </div>

        {/* right: managers */}
        <div className="flex min-w-0 flex-1">
          <div className="flex w-[626px] shrink-0 flex-col border-x border-[#5c5c5c]">
            <div className="flex h-[473px] shrink-0 flex-col border-t border-[#5c5c5c]">
              <div className="flex h-[25px] shrink-0 items-center gap-[8px] border-b border-[#2e2e2e] pl-[5px] pr-[4px]">
                <HeaderGrip />
                <PanelMenu items={[["文件"], ["编辑"], ["查看"], ["对象"], ["标签", true], ["书签"]]} />
                <div className="ml-auto flex items-center gap-[4px]">
                  <svg width="14" height="20"><circle cx="5" cy="6" r="4" fill="none" stroke="#1e1e1e" strokeWidth="1.500" /><path d="M8 9l5 8" stroke="#1e1e1e" strokeWidth="2.500" /></svg>
                  <svg width="16" height="18"><path d="M8 1l7 8h-3v7H4V9H1z" fill="none" stroke="#111" strokeWidth="2.200" /></svg>
                  <svg width="14" height="10"><ellipse cx="7" cy="5" rx="6" ry="3.500" fill="none" stroke="#6a6a6a" /></svg>
                  <svg width="13" height="20"><rect x=".5" y="1" width="12" height="18" fill="none" stroke="#1e1e1e" /><rect y="1" width="13" height="4" fill="#1e1e1e" /><path d="M6.500 8v8M3 12h7" stroke="#1e1e1e" strokeWidth="1.200" /></svg>
                </div>
              </div>
              <div className="flex min-h-0 flex-1 border-t border-[#5a5a5a]">
                <div className="w-[41px] shrink-0 border-r border-[#5e5e5e]" />
              </div>
            </div>
            <div className="mt-[5px] flex min-h-0 flex-1 flex-col"><AttributePanel /></div>
          </div>
          <RightTabs />
        </div>
      </div>
      <div className="h-[2px] shrink-0 bg-[#c9d9e8]" />

      {/* red annotation */}
      <div className="absolute left-[1152px] top-[78px] h-[80px] w-[127px] rounded-[4px] border-4 border-[#ff2015]" />
      <svg width="1920" height="1034" className="pointer-events-none absolute left-0 top-0">
        <path d="M1058 255.500L1184 135 1180 128 1201 126 1192 144 1188 141 1060 258Z" fill="#ff2015" />
      </svg>

      {/* site watermark */}
      <div className="absolute left-[1803px] top-[997px] flex h-[32px] w-[113px] items-center rounded-[6px] bg-[#eef0f2] pl-[7px]">
        <svg width="22" height="28" viewBox="0 0 22 28"><path d="M9 1l7 13-5 2 8 11-6-3-4-9-1 11-7 1z" fill="#1f5fa8" /><path d="M9 1l7 13-5 2z" fill="#0e3d7a" /></svg>
        <div className="ml-[6px] flex flex-col">
          <span className="text-[14px] font-bold leading-[15px] text-[#1f5fa8]">Revit<span className="text-[#222]">中文网</span></span>
          <span className="text-[8px] font-bold leading-[10px] text-[#333]">www.chinarevit.com</span>
        </div>
      </div>
    </div>
  );
}
